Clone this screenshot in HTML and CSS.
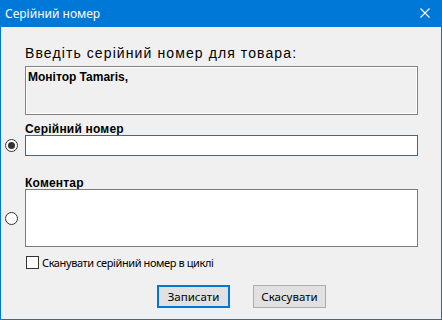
FILE: index.html
```html
<!DOCTYPE html>
<html lang="uk">
<head>
  <meta charset="UTF-8" />
  <title>Серійний номер</title>
  <link rel="stylesheet" href="styles.css">
</head>
<body>
  <div class="window">
    <div class="titlebar">
      <span class="title">Серійний номер</span>
      <svg class="close" width="10" height="10" viewBox="0 0 10 10">
        <path d="M0.5 0.5 L9.5 9.5 M9.5 0.5 L0.5 9.5" stroke="#fff" stroke-width="1.1" fill="none" />
      </svg>
    </div>

    <div class="content">
      <div class="heading">Введіть серійний номер для товара:</div>
      <div class="info">Монітор Tamaris,</div>

      <!-- серійний номер -->
      <div class="field-label">Серійний номер</div>
      <div class="field-row">
        <span class="radio checked"></span>
        <div class="input focused"></div>
      </div>

      <!-- коментар -->
      <div class="field-label comment-label">Коментар</div>
      <div class="field-row">
        <span class="radio"></span>
        <div class="input area"></div>
      </div>

      <label class="check-row">
        <span class="checkbox"></span>
        <span>Сканувати серійний номер в циклі</span>
      </label>

      <div class="buttons">
        <button class="btn default">Записати</button>
        <button class="btn">Скасувати</button>
      </div>
    </div>
  </div>
</body>
</html>
```

FILE: styles.css
```css
* {
  box-sizing: border-box;
}
body {
  margin: 0;
  background-color: #f0f0f0;
}
.window {
  width: 442px;
  height: 320px;
  background-color: #f0f0f0;
  border: 1px solid #0078d7;
  border-top: none;
}
.titlebar {
  height: 27px;
  background-color: #0078d7;
  color: white;
  display: flex;
  align-items: center;
  justify-content: space-between;
  padding: 0 11px 1px 4px;
  font-family: "Noto Sans", sans-serif;
  font-size: 12px;
}
.content {
  padding: 0 23px 0 0;
  font-family: "Liberation Sans", Arial, sans-serif;
  color: #000;
}
.heading {
  margin-left: 24px;
  padding-top: 19px;
  font-size: 14px;
  letter-spacing: 1.1px;
  line-height: 14px;
}
.info {
  margin: 6px 0 0 24px;
  height: 49px;
  border: 1px solid #828282;
  box-shadow: inset 0 0 0 1px #fff;
  padding: 4px 2px;
  font-size: 12px;
  font-weight: bold;
  line-height: 13px;
}
.field-label {
  margin: 8px 0 0 24px;
  font-size: 12px;
  font-weight: bold;
  line-height: 12px;
  letter-spacing: 0.2px;
}
.comment-label {
  margin-top: 21px;
}
.field-row {
  display: flex;
  align-items: center;
}
.radio {
  width: 13px;
  height: 13px;
  margin: 0 7px 0 4px;
  border: 1px solid #333;
  border-radius: 50%;
  background: #fff;
  position: relative;
}
.radio.checked::after {
  content: "";
  position: absolute;
  left: 2px;
  top: 2px;
  width: 7px;
  height: 7px;
  border-radius: 50%;
  background: #333;
}
.input {
  flex: 1;
  height: 21px;
  background: #fff;
  border: 1px solid #7a7a7a;
}
.input.focused {
  border-color: #0078d7;
}
.input.area {
  height: 58px;
}
.check-row {
  display: flex;
  align-items: center;
  gap: 3px;
  margin: 8px 0 0 25px;
  font-family: "Noto Sans", sans-serif;
  font-size: 11px;
  letter-spacing: -0.4px;
}
.checkbox {
  width: 13px;
  height: 13px;
  border: 1px solid #333;
  background: #fff;
}
.buttons {
  display: flex;
  gap: 23px;
  margin-top: 15px;
  padding-left: 156px;
}
.btn {
  width: 73px;
  height: 23px;
  padding: 0;
  background-color: #e1e1e1;
  border: 1px solid #adadad;
  font-family: "Noto Sans", sans-serif;
  font-size: 11.5px;
  color: #000;
}
.btn.default {
  border: 2px solid #0078d7;
}
```
